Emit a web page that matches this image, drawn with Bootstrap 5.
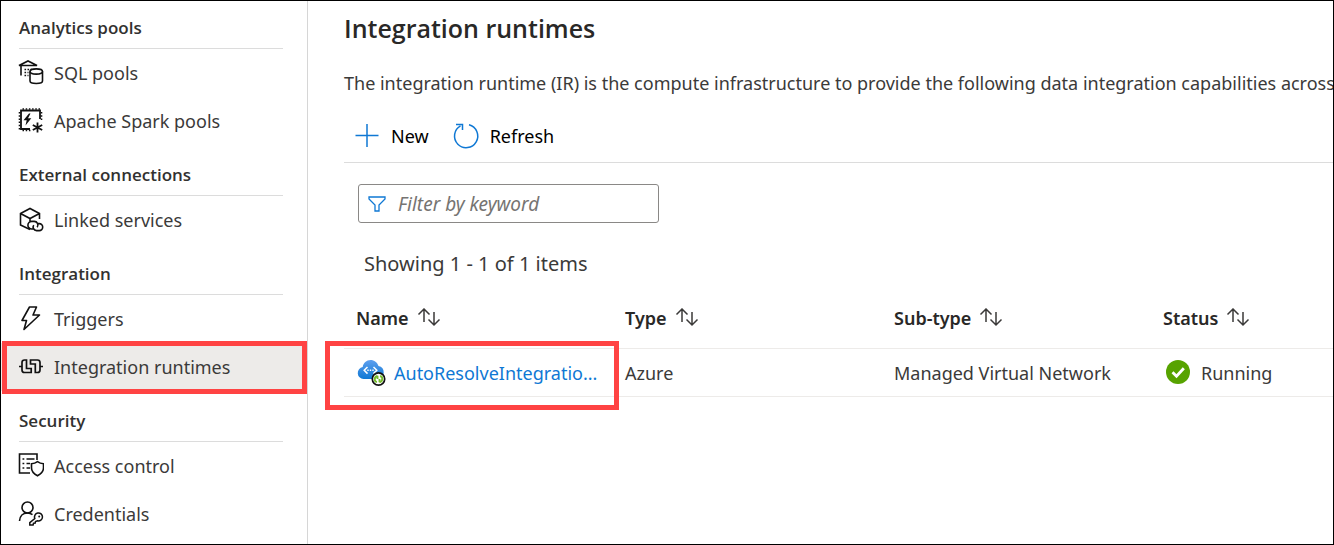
<!DOCTYPE html>
<html lang="en">
<head>
<meta charset="utf-8">
<meta name="viewport" content="width=device-width, initial-scale=1">
<title>Integration runtimes</title>
<link href="https://cdn.jsdelivr.net/npm/bootstrap@5.3.0/dist/css/bootstrap.min.css" rel="stylesheet">
<style>
  body { font-family: "Noto Sans", "Open Sans", sans-serif; font-size: 18px; line-height: 24px; color: #3b3a39; background: #fff; }
  .app-shell { border: 1px solid #000; min-height: 100vh; }
  .side-menu { width: 307px; border-right: 1px solid #d6d6d6; }
  .group-title { font-family: "Open Sans", sans-serif; font-size: 17px; line-height: 24px; font-weight: 600; color: #323130; margin: 0 24px 0 18px; padding: 18px 0 8px; border-bottom: 1px solid #dcdcdc; }
  .group-title.first-title { padding-top: 15px; }
  .side-menu .menu-link { height: 48px; padding: 0 0 0 17px; gap: 10px; color: #3b3a39; border-radius: 0; }
  .side-menu .menu-link svg { width: 26px; height: 26px; fill: none; stroke: #111; stroke-width: 1.6; flex: none; }
  .menu-link.active { background: #edebe9; }
  .callout-box { position: absolute; border: 5px solid #ff4343; pointer-events: none; }
  .menu-callout { inset: -2px 0 -3px 1px; }
  .row-callout { inset: -8px -6px -14px -19px; }
  .main-pane { min-width: 0; padding-left: 36px; overflow: hidden; }
  .page-title { font-family: "Open Sans", sans-serif; font-size: 25px; line-height: 32px; font-weight: 600; color: #292827; margin: 11px 0 0; }
  .intro { margin: 27px 0 0; }
  .tool-bar { border-bottom: 1px solid #dcdcdc; padding: 19px 0 11px 8px; gap: 22px; margin-top: 7px; }
  .tool-btn { padding: 0; border: 0; font-size: 18px; line-height: 24px; color: #000; gap: 9px; }
  .tool-btn svg { width: 30px; height: 30px; fill: none; stroke: #0f78d4; stroke-width: 1.5; }
  .filter-box { width: 301px; height: 39px; margin: 21px 0 0 14px; border: 1px solid #8a8886; border-radius: 3px; padding: 0 9px; gap: 12px; }
  .filter-box svg { width: 18px; height: 18px; fill: none; stroke: #0f78d4; stroke-width: 1.3; flex: none; }
  .filter-box input { font-size: 19px; line-height: 24px; border: 0; padding: 0; box-shadow: none !important; }
  .filter-box input::placeholder { font-style: italic; color: #767472; opacity: 1; }
  .count-line { margin: 29px 0 0 20px; font-size: 20px; }
  .runtime-table { table-layout: fixed; margin: 12px 0 0; color: #3b3a39; }
  .runtime-table th { width: 269px; height: 60px; padding: 0 12px; font-size: 18px; font-weight: 600; color: #292827; border-bottom: 1px solid #edebe9; vertical-align: middle; }
  .runtime-table th:last-child { width: auto; }
  .runtime-table td { height: 48px; padding: 2px 12px 0; border-bottom: 1px solid #edebe9; vertical-align: middle; }
  .sort-btn { padding: 0; border: 0; line-height: 0; }
  .sort-btn svg { width: 24px; height: 20px; fill: none; stroke: #3b3a39; stroke-width: 1.5; }
  .runtime-link { color: #0f78d4; text-decoration: none; }
</style>
</head>
<body>
<div class="app-shell d-flex overflow-hidden">
  <nav class="side-menu flex-shrink-0" aria-label="Manage">
    <h2 class="group-title first-title">Analytics pools</h2>
    <div class="nav flex-column flex-nowrap">
      <a class="menu-link nav-link d-flex align-items-center" href="#">
        <svg viewBox="0 0 26 26"><path d="M1 5.500 10 1l9 4.500zM3 6v9.500" stroke-width="1.600"/><path d="M6.500 9.500H14M6.500 12.500h4M6.500 15.500h4" stroke-dasharray="1.600 1.400"/><path d="M12 11.500v9.500c0 3.300 12.500 3.300 12.500 0v-9.500"/><ellipse cx="18.250" cy="11.500" rx="6.250" ry="2.600"/></svg>
        SQL pools</a>
      <a class="menu-link nav-link d-flex align-items-center" href="#">
        <svg viewBox="0 0 26 26"><path d="M12 21H3V2.500h19V11" stroke-width="1.800"/><path d="M4.500 1H22M4.500 22.500H13" stroke-dasharray="1.500 1.700"/><path d="M1.500 4v17.500M23.500 4v8.500" stroke-dasharray="1.500 1.700"/><path d="M11 5.500 5.500 12.300h3.200L7.500 17.500l5.800-7.200H10l2.500-4.800z" fill="#111" stroke="none"/><path d="M19.500 14.500v10M14.800 17l9.400 5M14.800 22l9.400-5" stroke-width="1.800"/></svg>
        Apache Spark pools</a>
    </div>
    <h2 class="group-title">External connections</h2>
    <div class="nav flex-column flex-nowrap">
      <a class="menu-link nav-link d-flex align-items-center" href="#">
        <svg viewBox="0 0 26 26"><path d="M12 22.500 2.500 18V6.500l9.500-5 9.500 5V12M2.500 6.500l9.500 5 9.500-5M12 11.500V14"/><path d="M16.500 22h-2.800a3.800 3.800 0 0 1 0-7.600h2.500a3.700 3.700 0 0 1 3 5.900M19.500 16.600h1.700a3.500 3.500 0 0 1 0 7h-2.600a3.500 3.500 0 0 1-2.900-5.500"/></svg>
        Linked services</a>
    </div>
    <h2 class="group-title">Integration</h2>
    <div class="nav flex-column flex-nowrap">
      <a class="menu-link nav-link d-flex align-items-center" href="#">
        <svg viewBox="0 0 26 26"><path d="M11.500 1h7l-3.500 8h6.500L6 23.500l2.500-9H4z" stroke-linejoin="round"/></svg>
        Triggers</a>
      <a class="menu-link nav-link active d-flex align-items-center position-relative" href="#" aria-current="page">
        <svg viewBox="0 0 26 26"><path d="M1 12.500h3M22 12.500h3M8.500 6H6.500Q4 6 4 8.500V16q0 2.500 2.500 2.500h6.700v-4H8.500zM12.500 10V6h7Q22 6 22 8.500V16q0 2.500-2.500 2.500H17.300V10z" stroke-width="1.700"/></svg>
        Integration runtimes
        <span class="callout-box menu-callout"></span></a>
    </div>
    <h2 class="group-title">Security</h2>
    <div class="nav flex-column flex-nowrap">
      <a class="menu-link nav-link d-flex align-items-center" href="#">
        <svg viewBox="0 0 26 26"><path d="M12 20H1.500V1H19v6"/><path d="M4.500 6h1.800M8.500 6h8M4.500 10.500h1.800M8.500 10.500H12M4.500 15h1.800M8.500 15H12"/><path d="M19.500 8.700c2 1.500 4 2 6 2.100V15c0 4-3 6.200-6 7.800-3-1.600-6-3.800-6-7.800v-4.200c2-.1 4-.6 6-2.100z"/></svg>
        Access control</a>
      <a class="menu-link nav-link d-flex align-items-center" href="#">
        <svg viewBox="0 0 26 26"><circle cx="9.500" cy="6.500" r="5.500"/><path d="M1.500 20c.3-5 3.500-8 8-8 2 0 3.500.5 5 1.700"/><path d="M16.800 17.500a4 4 0 1 1 2.700 2.300l-2 .7-.3 1.600-1.700.2-.4 1.700h-3.300v-2.300z" stroke-width="1.500"/><circle cx="21.200" cy="15.500" r="1" fill="#111" stroke="none"/></svg>
        Credentials</a>
    </div>
  </nav>

  <main class="main-pane flex-grow-1">
    <h1 class="page-title">Integration runtimes</h1>
    <p class="intro text-nowrap">The integration runtime (IR) is the compute infrastructure to provide the following data integration capabilities across</p>
    <div class="tool-bar d-flex align-items-center">
      <button type="button" class="tool-btn btn d-flex align-items-center"><svg viewBox="0 0 30 30"><path d="M15 3v23M3.500 14.500h23"/></svg>New</button>
      <button type="button" class="tool-btn btn d-flex align-items-center"><svg viewBox="0 0 30 30"><path d="M18 3.800a11.600 11.600 0 1 1-8.500 1.100M5 3.500h6.500V9"/></svg>Refresh</button>
    </div>
    <div class="filter-box d-flex align-items-center">
      <svg viewBox="0 0 18 18"><path d="M1 2h16v2l-6 6v6H7v-6L1 4z"/></svg>
      <input type="text" class="form-control" placeholder="Filter by keyword" aria-label="Filter by keyword">
    </div>
    <p class="count-line">Showing 1 - 1 of 1 items</p>
    <table class="runtime-table table table-borderless">
      <thead>
        <tr>
          <th scope="col"><div class="d-flex align-items-center gap-2">Name<button type="button" class="sort-btn btn" aria-label="Sort by name"><svg viewBox="0 0 24 20"><path d="M7 14V1M1.500 6.500 7 1l5.500 5.500M17 4v13M11.500 11.500 17 17l5.500-5.500"/></svg></button></div></th>
          <th scope="col"><div class="d-flex align-items-center gap-2">Type<button type="button" class="sort-btn btn" aria-label="Sort by type"><svg viewBox="0 0 24 20"><path d="M7 14V1M1.500 6.500 7 1l5.500 5.500M17 4v13M11.500 11.500 17 17l5.500-5.500"/></svg></button></div></th>
          <th scope="col"><div class="d-flex align-items-center gap-2">Sub-type<button type="button" class="sort-btn btn" aria-label="Sort by sub-type"><svg viewBox="0 0 24 20"><path d="M7 14V1M1.500 6.500 7 1l5.500 5.500M17 4v13M11.500 11.500 17 17l5.500-5.500"/></svg></button></div></th>
          <th scope="col"><div class="d-flex align-items-center gap-2">Status<button type="button" class="sort-btn btn" aria-label="Sort by status"><svg viewBox="0 0 24 20"><path d="M7 14V1M1.500 6.500 7 1l5.500 5.500M17 4v13M11.500 11.500 17 17l5.500-5.500"/></svg></button></div></th>
        </tr>
      </thead>
      <tbody>
        <tr>
          <td class="position-relative">
            <div class="d-flex align-items-center gap-2">
              <svg class="flex-shrink-0" width="30" height="30" viewBox="0 0 30 30">
                <defs><linearGradient id="cloud" x1="0" y1="0" x2="0" y2="1"><stop offset="0" stop-color="#5ea0ef"/><stop offset="1" stop-color="#0f78d4"/></linearGradient></defs>
                <path d="M7.500 21a6 6 0 0 1-.8-11.900C7.300 5 10.500 2 14.500 2c3.900 0 6.800 2.400 8 6a6.600 6.600 0 0 1-.6 13z" fill="url(#cloud)"/>
                <path d="m11.500 9-3.300 3.300 3.300 3.300M17.500 9l3.300 3.300-3.300 3.300" fill="none" stroke="#fff" stroke-width="1.500"/>
                <path d="M11.300 12.300h6.500" stroke="#fff" stroke-width="1.400" stroke-dasharray="1.400 1.100"/>
                <circle cx="22.500" cy="21" r="6.200" fill="#fff" stroke="#111" stroke-width="1.700"/>
                <path d="M21.500 17.800q-2.800.7-2.800 3.500 0 2.300 2.200 2.800M21.500 17.800v3.200M23.500 24.300q2.800-.7 2.800-3.500 0-2.300-2.200-2.800M23.500 24.300v-3.200" fill="none" stroke="#76bc2d" stroke-width="1.900"/>
              </svg>
              <a class="runtime-link" href="#">AutoResolveIntegratio...</a>
            </div>
            <span class="callout-box row-callout"></span>
          </td>
          <td>Azure</td>
          <td>Managed Virtual Network</td>
          <td>
            <div class="d-flex align-items-center gap-2">
              <svg class="flex-shrink-0" width="30" height="30" viewBox="0 0 30 30"><circle cx="15" cy="14" r="12" fill="#57a300"/><path d="m9.500 14.300 4 4 7.300-8" fill="none" stroke="#fff" stroke-width="2.800"/></svg>
              Running
            </div>
          </td>
        </tr>
      </tbody>
    </table>
  </main>
</div>
<script src="https://cdn.jsdelivr.net/npm/bootstrap@5.3.0/dist/js/bootstrap.bundle.min.js"></script>
</body>
</html>
